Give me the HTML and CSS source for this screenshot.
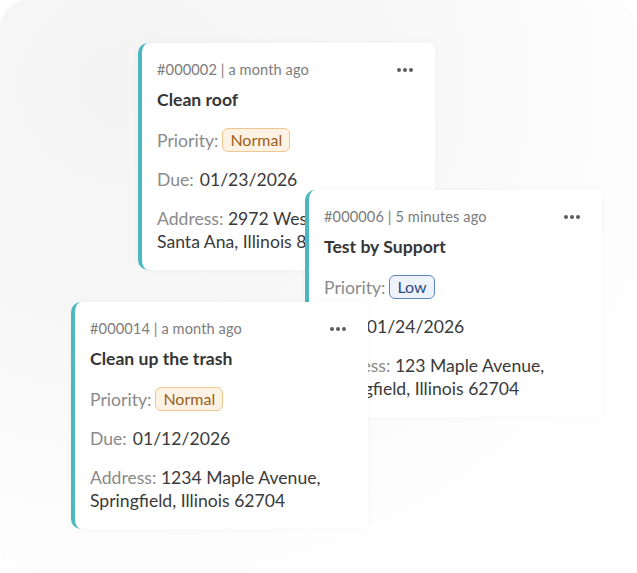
FILE: index.html
```html
<!DOCTYPE html>
<html>
<head>
<meta charset="utf-8">
<link rel="stylesheet" href="styles.css">
</head>
<body>
<div class="stage">
  <div class="panel"></div>

  <div class="card card-a">
    <div class="meta-row">
      <span class="meta">#000002 | a month ago</span>
      <svg class="dots" width="16" height="4" viewBox="0 0 16 4"><circle cx="2" cy="2" r="2"/><circle cx="8" cy="2" r="2"/><circle cx="14" cy="2" r="2"/></svg>
    </div>
    <div class="title">Clean roof</div>
    <div class="row"><span class="label">Priority:</span><span class="badge badge-normal">Normal</span></div>
    <div class="row"><span class="label">Due:</span><span class="value">01/23/2026</span></div>
    <div class="address"><span class="label">Address:</span> <span class="value">2972 Westheimer Rd.<br>Santa Ana, Illinois 85486</span></div>
  </div>

  <div class="card card-b">
    <div class="meta-row">
      <span class="meta">#000006 | 5 minutes ago</span>
      <svg class="dots" width="16" height="4" viewBox="0 0 16 4"><circle cx="2" cy="2" r="2"/><circle cx="8" cy="2" r="2"/><circle cx="14" cy="2" r="2"/></svg>
    </div>
    <div class="title">Test by Support</div>
    <div class="row"><span class="label">Priority:</span><span class="badge badge-low">Low</span></div>
    <div class="row"><span class="label">Due:</span><span class="value">01/24/2026</span></div>
    <div class="address"><span class="label">Address:</span> <span class="value">123 Maple Avenue,<br>Springfield, Illinois 62704</span></div>
  </div>

  <div class="card card-c">
    <div class="meta-row">
      <span class="meta">#000014 | a month ago</span>
      <svg class="dots" width="16" height="4" viewBox="0 0 16 4"><circle cx="2" cy="2" r="2"/><circle cx="8" cy="2" r="2"/><circle cx="14" cy="2" r="2"/></svg>
    </div>
    <div class="title">Clean up the trash</div>
    <div class="row"><span class="label">Priority:</span><span class="badge badge-normal">Normal</span></div>
    <div class="row"><span class="label">Due:</span><span class="value">01/12/2026</span></div>
    <div class="address"><span class="label">Address:</span> <span class="value">1234 Maple Avenue,<br>Springfield, Illinois 62704</span></div>
  </div>
</div>
</body>
</html>
```
FILE: styles.css
```css
html, body {
  margin: 0;
  padding: 0;
  background: #ffffff;
}
body {
  font-family: Lato, "Noto Sans", "Liberation Sans", sans-serif;
}
.stage {
  position: relative;
  width: 637px;
  height: 573px;
  overflow: hidden;
  background: #ffffff;
}
.panel {
  position: absolute;
  left: 0;
  top: 0;
  width: 637px;
  height: 573px;
  border-radius: 28px;
  background: radial-gradient(ellipse 620px 560px at 20% 15%, #f4f4f4 0%, #f7f7f7 40%, #fcfcfc 75%, #ffffff 100%);
}
.card {
  position: absolute;
  box-sizing: border-box;
  width: 297px;
  height: 227px;
  background: #ffffff;
  border-left: 4px solid #4bb8c0;
  border-radius: 10px 6px 6px 10px;
  padding: 16px 20px 17px 15px;
  display: flex;
  flex-direction: column;
  box-shadow: 0 0 10px rgba(0, 0, 0, 0.03);
}
.card-a { left: 138px; top: 43px; z-index: 1; }
.card-b { left: 305px; top: 190px; z-index: 2; }
.card-c { left: 71px; top: 302px; z-index: 3; }

.meta-row {
  display: flex;
  align-items: center;
  justify-content: space-between;
  height: 20px;
  padding-right: 2px;
  white-space: nowrap;
}
.meta {
  font-size: 14.6px;
  color: #7c7c7c;
  letter-spacing: 0.1px;
}
.dots {
  fill: #5a5e60;
  margin-top: 1px;
  flex: none;
}
.title {
  margin-top: 10px;
  font-size: 17.6px;
  font-weight: 700;
  line-height: 22px;
  color: #363636;
  white-space: nowrap;
}
.row {
  display: flex;
  align-items: center;
  gap: 4px;
  height: 24px;
  margin-top: 17px;
  font-size: 17.6px;
  white-space: nowrap;
}
.row + .row {
  margin-top: 15px;
  gap: 6px;
}
.label {
  color: #8a8a8a;
}
.value {
  color: #3a3a3a;
}
.badge {
  box-sizing: border-box;
  height: 24px;
  line-height: 22px;
  padding: 0 7px;
  border-radius: 6px;
  font-size: 16px;
  border: 1px solid;
}
.badge-normal {
  background: #fdf2e4;
  border-color: #efc78e;
  color: #9b611d;
}
.badge-low {
  background: #eef3fb;
  border-color: #5f84c4;
  color: #2b4a82;
}
.address {
  margin-top: 16px;
  font-size: 17.6px;
  line-height: 23px;
  white-space: nowrap;
}
```
